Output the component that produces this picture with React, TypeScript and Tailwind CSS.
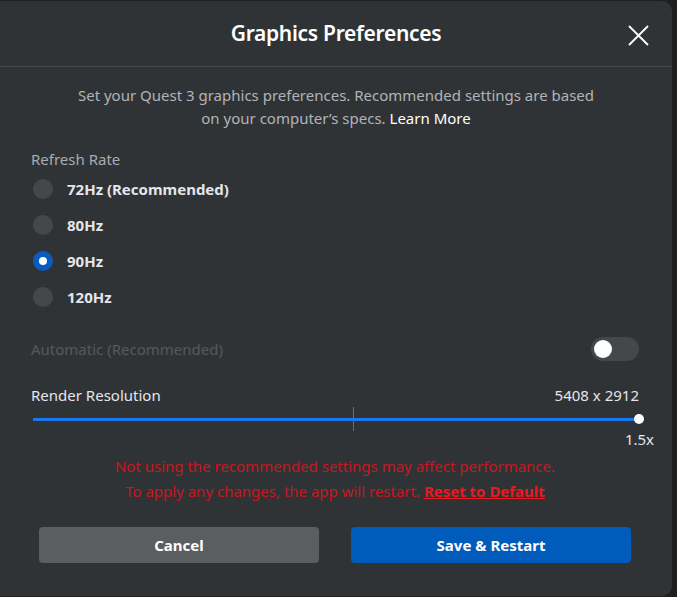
import { useState } from 'react';

const rates = ['72Hz (Recommended)', '80Hz', '90Hz', '120Hz'];

export default function App() {
  const [rate, setRate] = useState('90Hz');

  return (
    <div
      className="w-[677px] h-[597px] bg-[#1e1f21] flex overflow-hidden"
      style={{ fontFamily: '"Noto Sans", "Open Sans", sans-serif' }}
    >
      <div className="w-[672px] h-[595px] mt-[1px] bg-[#303336] rounded-r-[10px] flex flex-col">
        {/* Header */}
        <div className="relative h-[66px] border-b border-[#46494c] flex items-center justify-center">
          <h1 className="text-[21px] font-semibold text-white tracking-[-0.3px]">Graphics Preferences</h1>
          <button className="absolute right-[23px] top-[24px] text-white">
            <svg width="21" height="21" viewBox="0 0 21 21" fill="none" stroke="currentColor" strokeWidth={1.8}>
              <path d="M1 1L20 20M20 1L1 20" />
            </svg>
          </button>
        </div>

        {/* Description */}
        <p className="mt-[17px] text-center text-[15px] leading-[23px] text-[#b0b3b8] px-[60px]">
          Set your Quest 3 graphics preferences. Recommended settings are based
          <br />
          on your computer’s specs. <span className="text-white">Learn More</span>
        </p>

        <div className="pl-[31px] pr-[33px] mt-[18px] flex flex-col">
          <div className="h-[23px] leading-[22px] text-[15px] text-[#a8abaf]">Refresh Rate</div>
          {rates.map((r) => (
            <button key={r} onClick={() => setRate(r)} className="h-[36px] flex items-center gap-[14px] pl-[2px] text-left">
              {rate === r ? (
                <span className="w-[20px] h-[20px] rounded-full bg-[#0a5bc0] flex items-center justify-center">
                  <span className="w-[8px] h-[8px] rounded-full bg-white" />
                </span>
              ) : (
                <span className="w-[20px] h-[20px] rounded-full bg-[#45484b]" />
              )}
              <span className="text-[15px] font-bold text-[#e4e6eb]">{r}</span>
            </button>
          ))}

          {/* Automatic */}
          <div className="mt-[22px] h-[24px] flex items-center justify-between">
            <span className="text-[15px] text-[#56595c]">Automatic (Recommended)</span>
            <span className="w-[48px] h-[24px] rounded-full bg-[#45484b] flex items-center px-[3px]">
              <span className="w-[18px] h-[18px] rounded-full bg-white" />
            </span>
          </div>

          {/* Render resolution */}
          <div className="mt-[23px] h-[22px] flex items-center justify-between text-[15px] text-[#e4e6eb]">
            <span>Render Resolution</span>
            <span>5408 x 2912</span>
          </div>
          <div className="relative mt-[3px] h-[20px] ml-[2px] flex items-center">
            <div className="w-full h-[3px] bg-[#1877f2]" />
            <div className="absolute left-[320px] top-[-2px] w-[1px] h-[24px] bg-[#6a6d70]" />
            <div className="absolute right-[-5px] top-[5px] w-[10px] h-[10px] rounded-full bg-white" />
          </div>
          <div className="h-[20px] leading-[20px] text-right text-[15px] text-[#e4e6eb] -mr-[15px]">1.5x</div>

          {/* Warning */}
          <div className="mt-[5px] text-center text-[15px] leading-[25px] text-[#c9161e]">
            <div>Not using the recommended settings may affect performance.</div>
            <div>
              To apply any changes, the app will restart.{' '}
              <span className="font-bold underline text-[#e8191f]">Reset to Default</span>
            </div>
          </div>

          {/* Buttons */}
          <div className="mt-[23px] px-[8px] flex gap-[32px]">
            <button className="w-[280px] h-[36px] rounded-[4px] bg-[#5b5e60] text-white text-[15px] font-bold">Cancel</button>
            <button className="w-[280px] h-[36px] rounded-[4px] bg-[#005bbb] text-white text-[15px] font-bold">Save &amp; Restart</button>
          </div>
        </div>
      </div>
    </div>
  );
}
